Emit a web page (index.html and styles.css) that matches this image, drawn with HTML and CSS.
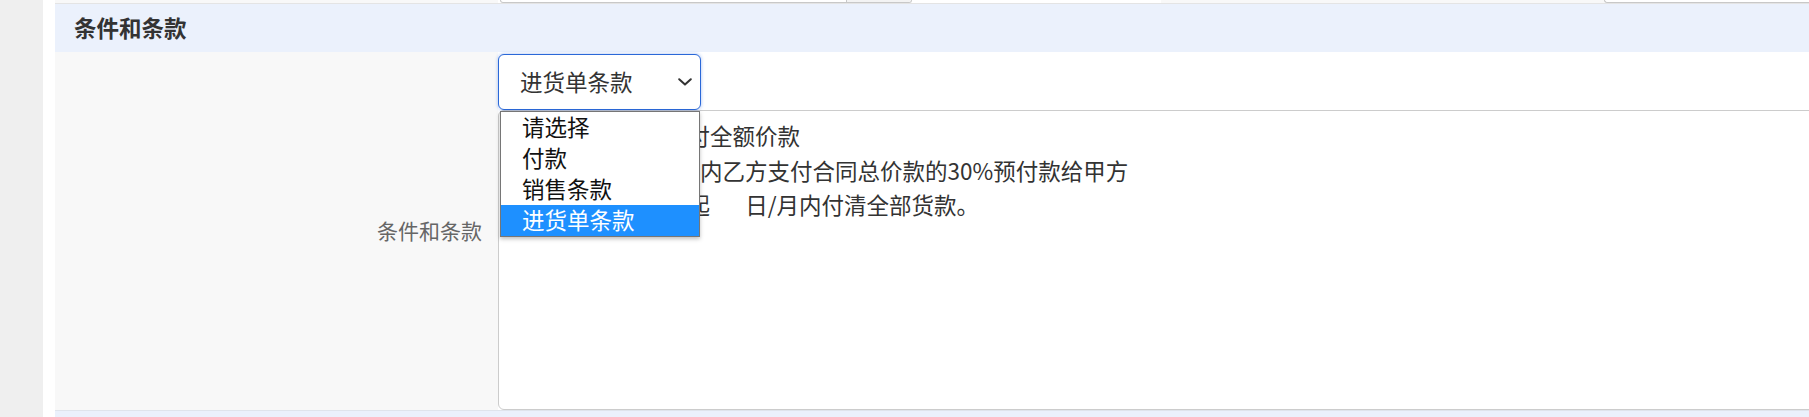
FILE: index.html
```html
<!DOCTYPE html>
<html lang="zh-CN">
<head>
<meta charset="utf-8">
<title>条件和条款</title>
<link rel="stylesheet" href="styles.css">
</head>
<body>
<div class="app">
  <aside class="rail"></aside>
  <main class="content">
    <div class="prev-row">
      <div class="prev-label"></div>
      <div class="prev-field">
        <div class="stub stub-date"><span class="stub-addon"></span></div>
      </div>
      <div class="prev-label prev-label-2"></div>
      <div class="prev-field">
        <div class="stub stub-wide"></div>
      </div>
    </div>

    <section class="section">
      <h2 class="section-title">条件和条款</h2>
      <div class="form-row">
        <label class="form-label" for="terms">条件和条款</label>
        <div class="form-field">
          <div class="select-wrap">
            <div class="select">
              <span class="select-value">进货单条款</span>
              <svg class="chevron" width="14" height="8" viewBox="0 0 14 8" aria-hidden="true"><path d="M1.2 1.2 L7 6.6 L12.8 1.2" fill="none" stroke="#333" stroke-width="2" stroke-linecap="round" stroke-linejoin="round"/></svg>
            </div>
            <ul class="options">
              <li class="option">请选择</li>
              <li class="option">付款</li>
              <li class="option">销售条款</li>
              <li class="option is-active">进货单条款</li>
            </ul>
          </div>
          <textarea id="terms" class="terms" readonly>一、甲方验收后付全额价款
二、签订合同5日内乙方支付合同总价款的30%预付款给甲方
三、自货到之日起       日/月内付清全部货款。</textarea>
        </div>
      </div>
    </section>

    <div class="next-section"></div>
  </main>
</div>
</body>
</html>
```

FILE: styles.css
```css
* {
  box-sizing: border-box;
}

html, body {
  margin: 0;
  padding: 0;
  background: #ffffff;
  overflow: hidden;
}

body {
  font-family: "Noto Sans CJK SC", "Noto Sans", sans-serif;
  color: #333333;
}

.app {
  display: flex;
  min-width: 1840px;
  height: 417px;
}

.rail {
  width: 43px;
  flex: none;
  background: #efefef;
}

.content {
  flex: 1;
  margin-left: 12px;
  display: flex;
  flex-direction: column;
}

/* remnant of the previous form row */
.prev-row {
  display: grid;
  grid-template-columns: 443px 663px 443px 1fr;
  height: 4px;
  border-bottom: 1px solid #e4e4e4;
}

.prev-label {
  background: #f8f8f8;
}

.prev-field {
  position: relative;
}

.stub {
  height: 3px;
  border: 1px solid #c8c8c8;
  border-top: none;
  background: #ffffff;
}

.stub-date {
  margin-left: 2px;
  width: 412px;
  border-radius: 0 0 5px 5px;
  display: flex;
  justify-content: flex-end;
}

.stub-addon {
  width: 65px;
  border-left: 1px solid #c8c8c8;
  background: #f3f3f3;
  border-radius: 0 0 5px 0;
}

.stub-wide {
  border-radius: 0 0 0 5px;
  border-right: none;
}

/* section */
.section {
  display: flex;
  flex-direction: column;
}

.section-title {
  margin: 0;
  height: 48px;
  display: flex;
  align-items: center;
  padding-left: 19px;
  padding-bottom: 1px;
  background: #ebf1fc;
  font-size: 22.5px;
  font-weight: 700;
  color: #333333;
  line-height: 1;
}

.form-row {
  display: grid;
  grid-template-columns: 443px 1fr;
  height: 358px;
}

.form-label {
  background: #f8f8f8;
  display: flex;
  align-items: center;
  justify-content: flex-end;
  padding-right: 16px;
  padding-bottom: 2px;
  font-size: 21px;
  color: #666666;
}

.form-field {
  display: flex;
  flex-direction: column;
  padding-top: 2px;
  background: #ffffff;
}

.select-wrap {
  position: relative;
  width: 203px;
  height: 56px;
  flex: none;
  z-index: 2;
}

.select {
  height: 100%;
  display: flex;
  align-items: center;
  justify-content: space-between;
  padding: 0 8px 2px 21px;
  border: 1px solid #2a68d8;
  border-radius: 6px;
  background: #ffffff;
  box-shadow: 0 0 3px 1px rgba(60, 120, 230, 0.28);
  font-size: 22.5px;
  color: #333333;
}

.chevron {
  flex: none;
  margin-top: 2px;
}

.options {
  position: absolute;
  top: 57px;
  left: 2px;
  width: 200px;
  margin: 0;
  padding: 0;
  list-style: none;
  background: #ffffff;
  border: 1px solid #767676;
  box-shadow: 0 2px 4px rgba(0, 0, 0, 0.25);
}

.option {
  height: 31px;
  line-height: 29px;
  padding-left: 21px;
  padding-bottom: 2px;
  font-size: 22.5px;
  color: #111111;
  white-space: nowrap;
}

.option.is-active {
  background: #1e90ff;
  color: #ffffff;
}

.terms {
  flex: 1;
  width: 100%;
  margin: 0;
  display: block;
  border: 1px solid #cccccc;
  border-radius: 6px;
  padding: 7px 20px 0 31px;
  font-family: "Noto Sans CJK SC", "Noto Sans", sans-serif;
  font-size: 22.5px;
  line-height: 34.5px;
  color: #333333;
  background: #ffffff;
  resize: none;
  overflow: hidden;
  outline: none;
}

.next-section {
  flex: 1;
  background: #ebf1fc;
  border-top: 1px solid #dfe4ec;
}
```
